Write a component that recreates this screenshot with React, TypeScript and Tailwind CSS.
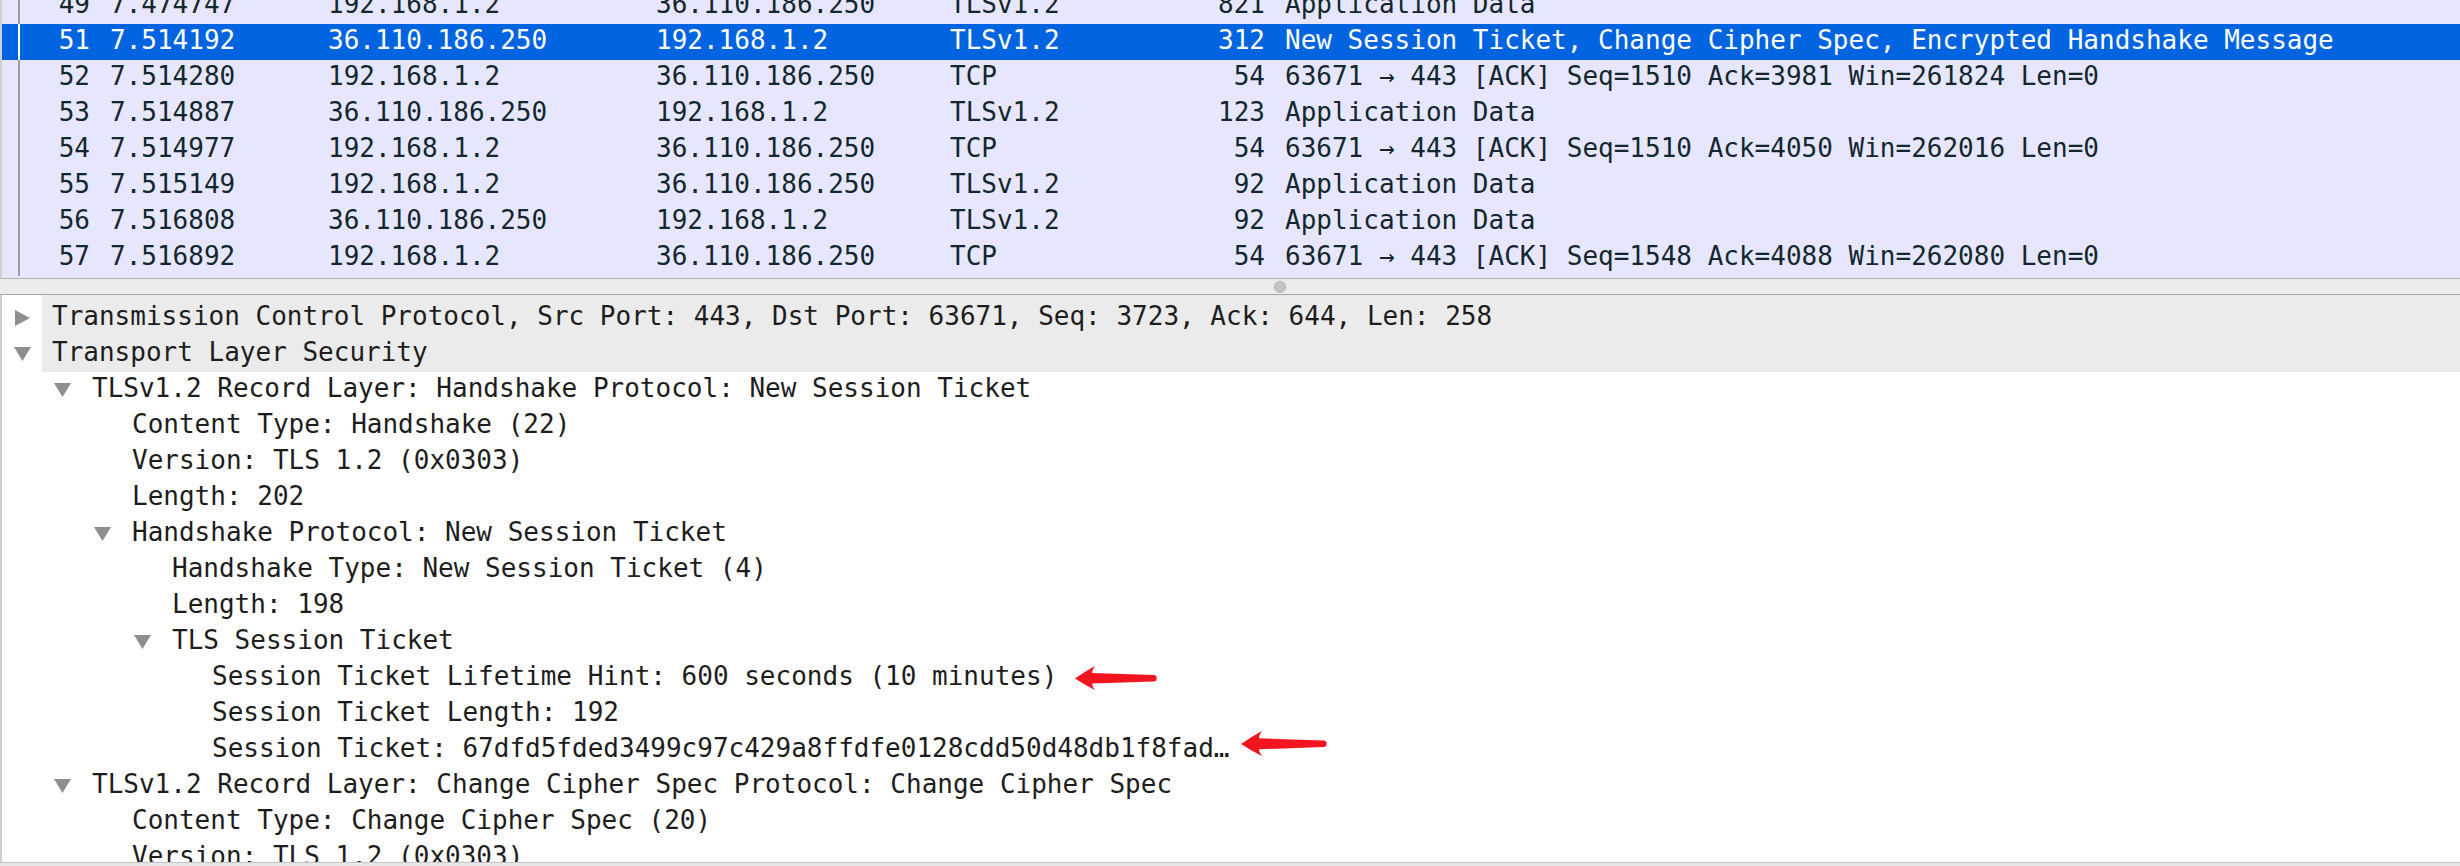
import React from "react";

type Packet = {
  no: string;
  time: string;
  src: string;
  dst: string;
  proto: string;
  len: string;
  info: string;
  selected?: boolean;
};

const packets: Packet[] = [
  { no: "49", time: "7.474747", src: "192.168.1.2", dst: "36.110.186.250", proto: "TLSv1.2", len: "821", info: "Application Data" },
  { no: "51", time: "7.514192", src: "36.110.186.250", dst: "192.168.1.2", proto: "TLSv1.2", len: "312", info: "New Session Ticket, Change Cipher Spec, Encrypted Handshake Message", selected: true },
  { no: "52", time: "7.514280", src: "192.168.1.2", dst: "36.110.186.250", proto: "TCP", len: "54", info: "63671 → 443 [ACK] Seq=1510 Ack=3981 Win=261824 Len=0" },
  { no: "53", time: "7.514887", src: "36.110.186.250", dst: "192.168.1.2", proto: "TLSv1.2", len: "123", info: "Application Data" },
  { no: "54", time: "7.514977", src: "192.168.1.2", dst: "36.110.186.250", proto: "TCP", len: "54", info: "63671 → 443 [ACK] Seq=1510 Ack=4050 Win=262016 Len=0" },
  { no: "55", time: "7.515149", src: "192.168.1.2", dst: "36.110.186.250", proto: "TLSv1.2", len: "92", info: "Application Data" },
  { no: "56", time: "7.516808", src: "36.110.186.250", dst: "192.168.1.2", proto: "TLSv1.2", len: "92", info: "Application Data" },
  { no: "57", time: "7.516892", src: "192.168.1.2", dst: "36.110.186.250", proto: "TCP", len: "54", info: "63671 → 443 [ACK] Seq=1548 Ack=4088 Win=262080 Len=0" },
];

type Node = {
  level: number;
  text: string;
  toggle?: "open" | "closed";
  arrow?: 1 | 2;
};

const tree: Node[] = [
  { level: 1, text: "TLSv1.2 Record Layer: Handshake Protocol: New Session Ticket", toggle: "open" },
  { level: 2, text: "Content Type: Handshake (22)" },
  { level: 2, text: "Version: TLS 1.2 (0x0303)" },
  { level: 2, text: "Length: 202" },
  { level: 2, text: "Handshake Protocol: New Session Ticket", toggle: "open" },
  { level: 3, text: "Handshake Type: New Session Ticket (4)" },
  { level: 3, text: "Length: 198" },
  { level: 3, text: "TLS Session Ticket", toggle: "open" },
  { level: 4, text: "Session Ticket Lifetime Hint: 600 seconds (10 minutes)", arrow: 1 },
  { level: 4, text: "Session Ticket Length: 192" },
  { level: 4, text: "Session Ticket: 67dfd5fded3499c97c429a8ffdfe0128cdd50d48db1f8fad…", arrow: 2 },
  { level: 1, text: "TLSv1.2 Record Layer: Change Cipher Spec Protocol: Change Cipher Spec", toggle: "open" },
  { level: 2, text: "Content Type: Change Cipher Spec (20)" },
  { level: 2, text: "Version: TLS 1.2 (0x0303)" },
];

const indent = ["pl-[0px]", "pl-[40px]", "pl-[80px]", "pl-[120px]", "pl-[160px]"];

const Toggle = ({ kind }: { kind?: "open" | "closed" }) => {
  if (kind === "closed")
    return (
      <svg width="15" height="16" viewBox="0 0 15 16">
        <polygon points="0,0 15,8 0,16" fill="#8e8e8e" />
      </svg>
    );
  if (kind === "open")
    return (
      <svg width="17" height="14" viewBox="0 0 17 14">
        <polygon points="0,0 17,0 8.5,14" fill="#8e8e8e" />
      </svg>
    );
  return null;
};

// red annotation arrow pointing left
const RedArrow = ({ big }: { big?: boolean }) => (
  <svg
    width={big ? 86 : 82}
    height={big ? 25 : 24}
    viewBox="0 0 84 24"
    preserveAspectRatio="none"
    className={big ? "shrink-0 ml-[12px] relative -top-[7px]" : "shrink-0 ml-[18px]"}
  >
    <path
      d="M0 12.5 Q11 5 20.5 0 Q17.5 4 17.5 7 L80.5 9 A3.2 3.2 0 0 1 80.5 15.4 L17.5 17.6 Q17.5 20.5 20.5 24 Q11 19.5 0 12.5 Z"
      fill="#f2141e"
    />
  </svg>
);

const PacketRow = ({ p }: { p: Packet }) => (
  <div
    className={
      "flex h-[36px] leading-[32px] whitespace-nowrap " +
      (p.selected ? "bg-[#0064e1] text-white" : "text-[#12272e]")
    }
  >
    <div className="w-[98px] shrink-0 flex">
      <div className="w-[16px]" />
      <div className={"w-[2px] h-full " + (p.selected ? "bg-white" : "bg-[#9c9ca6]")} />
      <div className="flex-1 text-right pr-[10px]">{p.no}</div>
    </div>
    <div className="w-[218px] shrink-0 pl-[10px]">{p.time}</div>
    <div className="w-[328px] shrink-0 pl-[10px]">{p.src}</div>
    <div className="w-[294px] shrink-0 pl-[10px]">{p.dst}</div>
    <div className="w-[240px] shrink-0 pl-[10px]">{p.proto}</div>
    <div className="w-[95px] shrink-0 text-right pr-[10px]">{p.len}</div>
    <div className="flex-1 pl-[10px]">{p.info}</div>
  </div>
);

const TreeRow = ({ n }: { n: Node }) => (
  <div className={"flex items-center h-[36px] whitespace-nowrap " + indent[n.level]}>
    <div className="w-[40px] shrink-0 flex items-center justify-center">
      <Toggle kind={n.toggle} />
    </div>
    <div className="pl-[10px] leading-[32px] self-start">{n.text}</div>
    {n.arrow === 1 && <RedArrow />}
    {n.arrow === 2 && <RedArrow big />}
  </div>
);

export default function App() {
  return (
    <div className="w-[2460px] h-[866px] overflow-hidden bg-white font-['DejaVu_Sans_Mono',monospace] text-[26px]">
      {/* packet list */}
      <div className="h-[279px] overflow-hidden bg-[#e7e6ff] border-l-2 border-l-[#d0d0d4] border-b border-b-[#b2b2b2]">
        <div className="-mt-[12px]">
          {packets.map((p) => (
            <PacketRow key={p.no} p={p} />
          ))}
        </div>
      </div>

      {/* splitter */}
      <div className="h-[16px] bg-[#ececec] border-b border-[#a6a6a6] flex items-center pl-[1274px]">
        <div className="w-[12px] h-[12px] rounded-full bg-[#c4c4c4] border border-[#b6b6b6]" />
      </div>

      {/* packet details */}
      <div className="h-[567px] overflow-hidden border-l-2 border-[#d0d0d0] text-[#1d1d1d]">
        <div className="flex">
          <div className="w-[40px] shrink-0 pt-[5px]">
            <div className="h-[36px] flex items-center justify-center">
              <Toggle kind="closed" />
            </div>
            <div className="h-[36px] flex items-center justify-center">
              <Toggle kind="open" />
            </div>
          </div>
          <div className="flex-1 bg-[#ebebeb] pt-[5px] whitespace-nowrap">
            <div className="h-[36px] leading-[32px] pl-[10px]">
              Transmission Control Protocol, Src Port: 443, Dst Port: 63671, Seq: 3723, Ack: 644, Len: 258
            </div>
            <div className="h-[36px] leading-[32px] pl-[10px]">Transport Layer Security</div>
          </div>
        </div>
        {tree.map((n, i) => (
          <TreeRow key={i} n={n} />
        ))}
      </div>

      <div className="h-[4px] bg-[#e6e6e6] border-t border-[#c6c6c6]" />
    </div>
  );
}
